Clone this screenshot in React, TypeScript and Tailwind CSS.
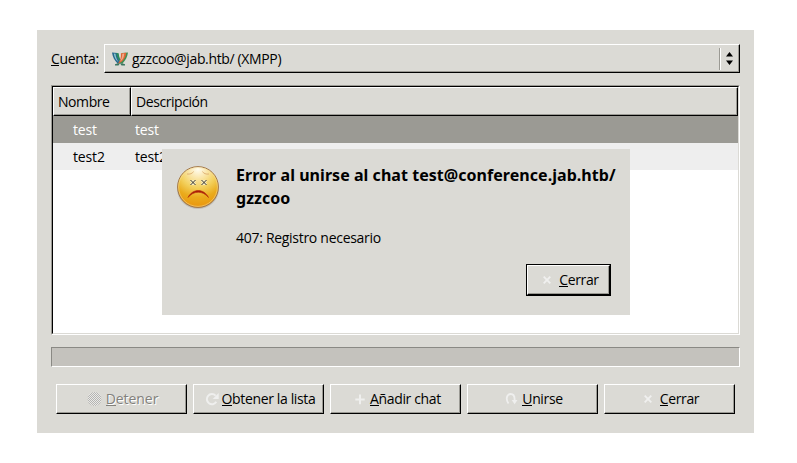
import type { ReactNode } from 'react';

const raised =
  'border border-t-white border-l-white border-b-black border-r-black shadow-[inset_-1px_-1px_0_#9b9a94]';

function CloseIcon() {
  return (
    <svg width="16" height="16" viewBox="0 0 16 16" fill="none" stroke="#f0f0ef" strokeWidth="1.8" className="shrink-0">
      <path d="M3.700 4.700l6.600 6.600M10.300 4.700l-6.600 6.600" />
    </svg>
  );
}

function PlusIcon() {
  return (
    <svg width="16" height="16" viewBox="0 0 16 16" fill="#efefee" className="shrink-0">
      <path d="M8 3.500h2v4h3.700v2H10v3.800H8V9.500H4.300v-2H8z" />
    </svg>
  );
}

function RefreshIcon() {
  return (
    <svg width="16" height="16" viewBox="0 0 16 16" fill="none" className="shrink-0">
      <path d="M12.600 4.600A5.100 5.100 0 1 0 13.300 10.800" stroke="#efefee" strokeWidth="2" />
      <path d="M15.700 2v6H9.700z" fill="#efefee" />
    </svg>
  );
}

function JoinIcon() {
  return (
    <svg width="16" height="16" viewBox="0 0 16 16" fill="none" className="shrink-0">
      <path d="M5.500 12.500C2.500 8.500 3.600 3 7.600 3c3 0 4 2.300 4 5.200v1.200" stroke="#efefee" strokeWidth="1.800" />
      <path d="M8.700 9h5.800l-2.900 4.200z" fill="#efefee" />
    </svg>
  );
}

function StopIcon() {
  return (
    <svg width="16" height="16" viewBox="0 0 16 16" className="shrink-0">
      <defs>
        <pattern id="stipple" width="2" height="2" patternUnits="userSpaceOnUse">
          <rect width="2" height="2" fill="#e9e9e8" />
          <rect width="1" height="1" fill="#b5b4b1" />
          <rect x="1" y="1" width="1" height="1" fill="#b5b4b1" />
        </pattern>
      </defs>
      <circle cx="7.500" cy="8" r="7" fill="url(#stipple)" />
    </svg>
  );
}

function XmppIcon() {
  return (
    <svg width="16" height="14" viewBox="0 0 16 14" className="shrink-0">
      <path d="M0 .5L5.500 1C5.500 5 7 8.500 9.500 11.500H5.500C2.500 8.500 .5 4.500 0 .5z" fill="#26688f" />
      <path d="M1.800 1.500L3.500 1.700c.2 3.500 1.500 6.500 3.500 8.800C4 8.500 2.300 5.200 1.800 1.500z" fill="#8fc6cd" />
      <path d="M4.300 1l2.400.3C7 5.500 8.500 8.300 11 11.300 7 9.500 4.800 6 4.300 1z" fill="#2b8a5c" />
      <path d="M16 .5L9.800 1C9.800 5 9 8.500 6.500 11.500h4C13.500 8.500 15.500 4.500 16 .5z" fill="#3f8f55" />
      <path d="M14.300 .7L8.900 1.200C9.200 5.500 8.300 9 5.500 12c5-2 8.100-5.500 8.800-11.300z" fill="#df6536" />
      <path d="M12.300 1.500L10.300 1.700c0 3-1 5.500-2.200 8 3-2 3.900-4.700 4.200-8.200z" fill="#f0a98a" />
      <path d="M3 12.200l3-.9 1.500.7-1 1.400H3zM13 12.200l-3-.9-1.500.7 1 1.400H13z" fill="#3b7560" />
    </svg>
  );
}

function SadFace() {
  return (
    <svg width="48" height="48" viewBox="0 0 48 48" className="shrink-0">
      <defs>
        <radialGradient id="face" cx="50%" cy="6%" r="96%">
          <stop offset="0" stopColor="#fffdf2" />
          <stop offset=".2" stopColor="#fbe9b4" />
          <stop offset=".48" stopColor="#f3d05c" />
          <stop offset=".72" stopColor="#eaab1c" />
          <stop offset="1" stopColor="#ea930c" />
        </radialGradient>
        <radialGradient id="shade">
          <stop offset=".8" stopColor="#5c554a" stopOpacity=".8" />
          <stop offset="1" stopColor="#5c554a" stopOpacity="0" />
        </radialGradient>
      </defs>
      <ellipse cx="24" cy="26" rx="21.500" ry="20.500" fill="url(#shade)" />
      <circle cx="24" cy="24" r="20.400" fill="url(#face)" stroke="#a37848" />
      <circle cx="24" cy="24" r="19.400" fill="none" stroke="#f8dfa0" strokeOpacity=".5" />
      <path d="M13 11c3 .5 5.500-.5 6.500-2.500M35 11c-3 .5-5.500-.5-6.500-2.500" fill="none" stroke="#dcae70" strokeWidth=".9" />
      <path d="M17 17.500l4 4m0-4l-4 4M28 17.500l4 4m0-4l-4 4" stroke="#fbf0c4" strokeWidth="2.600" />
      <path d="M16.500 17l5 5m0-5l-5 5M27.500 17l5 5m0-5l-5 5" stroke="#33322c" strokeWidth="1" />
      <path d="M14 34.500c4.500-9.300 16-9.300 20.500 0-5.500-7-15-7-20.500 0z" fill="#a81c08" stroke="#b52a08" strokeWidth=".6" />
    </svg>
  );
}

function Mnemonic({ text }: { text: string }) {
  return (
    <span className="whitespace-nowrap">
      <span className="inline-block h-[16px] border-b border-current leading-[18px]">{text[0]}</span>
      {text.slice(1)}
    </span>
  );
}

function Button({ icon, label, disabled = false }: { icon: ReactNode; label: string; disabled?: boolean }) {
  return (
    <button
      disabled={disabled}
      className={`flex h-[30px] w-[131px] items-center justify-center gap-[3px] ${raised} ${
        disabled ? 'pl-[2px] tracking-[-0.05px] text-[#82817c] [text-shadow:1px_1px_0_#fff]' : 'pl-px'
      }`}
    >
      {icon}
      <Mnemonic text={label} />
    </button>
  );
}

function ErrorDialog() {
  return (
    <div className="absolute top-[119px] left-[125px] flex h-[166px] w-[468px] flex-col bg-[#dbdad5] px-3 pt-[14px]">
      <div className="flex gap-[14px]">
        <SadFace />
        <div>
          <h1 className="pt-px font-['Noto_Sans',sans-serif] text-[16px] leading-[23px] font-bold tracking-[0.045px] whitespace-nowrap">
            Error al unirse al chat test@conference.jab.htb/
            <br />
            gzzcoo
          </h1>
          <p className="mt-[19px] leading-[18px] tracking-[-0.29px]">407: Registro necesario</p>
        </div>
      </div>
      <div className="mt-[17px] mr-[7px] self-end border border-black">
        <button className={`flex h-[30px] w-[83px] items-center justify-center gap-[3px] pl-[2px] ${raised}`}>
          <CloseIcon />
          <Mnemonic text="Cerrar" />
        </button>
      </div>
    </div>
  );
}

export default function App() {
  return (
    <div className="h-[463px] w-[797px] bg-white pt-[30px] pl-[37px] font-['Open_Sans','Noto_Sans',sans-serif] text-[14px] leading-[18px] tracking-[-0.36px] text-black">
      <main className="relative h-[403px] w-[717px] bg-[#dbdad5] px-[14px] pt-[14px]">
        <div className="flex h-[29px] items-center">
          <div className="w-[53px] shrink-0">
            <Mnemonic text="Cuenta:" />
          </div>
          <div className={`flex h-[29px] grow items-center pl-[7px] ${raised}`}>
            <XmppIcon />
            <span className="ml-[4px]">gzzcoo@jab.htb/ (XMPP)</span>
            <span className="ml-auto h-[22px] w-[2px] border-r border-l border-r-white border-l-[#9b9a94]" />
            <svg width="7" height="13" viewBox="0 0 7 13" className="mr-[6px] ml-[5px]">
              <path d="M3.500 0L7 4.500H0zM0 8.500h7L3.500 13z" />
            </svg>
          </div>
        </div>

        <div className="mt-3 h-[250px] border border-t-[#9b9a94] border-r-white border-b-white border-l-[#9b9a94]">
          <div className="h-full border border-t-black border-r-[#dbdad5] border-b-[#dbdad5] border-l-black bg-white">
            <div className="flex h-[29px] bg-[#dbdad5] tracking-[-0.43px]">
              <div className={`w-[78px] pt-[5px] pl-1 ${raised}`}>Nombre</div>
              <div className={`grow pt-[5px] pl-1 ${raised}`}>Descripción</div>
            </div>
            <div className="flex h-[27px] items-center bg-[#9b9a94] pl-5 tracking-[-0.15px] text-white">
              <span className="w-[62px]">test</span>
              <span>test</span>
            </div>
            <div className="flex h-[27px] items-center bg-[#eeeeee] pl-5 tracking-[-0.15px]">
              <span className="w-[62px]">test2</span>
              <span>test2</span>
            </div>
          </div>
        </div>

        <div className="mt-3 h-5 border border-t-[#8a8984] border-r-white border-b-white border-l-[#8a8984] bg-[#c4c2bd]" />

        <div className="mt-[17px] flex gap-[6px] pl-[5px]">
          <Button icon={<StopIcon />} label="Detener" disabled />
          <Button icon={<RefreshIcon />} label="Obtener la lista" />
          <Button icon={<PlusIcon />} label="Añadir chat" />
          <Button icon={<JoinIcon />} label="Unirse" />
          <Button icon={<CloseIcon />} label="Cerrar" />
        </div>

        <ErrorDialog />
      </main>
    </div>
  );
}
